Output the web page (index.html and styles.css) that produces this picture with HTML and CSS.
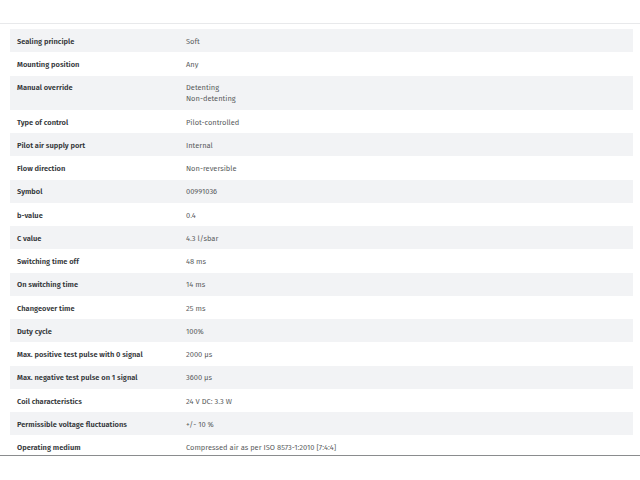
FILE: index.html
```html
<!DOCTYPE html>
<html>
<head>
<meta charset="utf-8">
<link rel="stylesheet" href="styles.css">
</head>
<body>
<div class="page">
  <div class="frame">
    <div class="specs">
      <div class="row"><div class="k">Sealing principle</div><div class="v">Soft</div></div>
      <div class="row"><div class="k">Mounting position</div><div class="v">Any</div></div>
      <div class="row"><div class="k">Manual override</div><div class="v">Detenting<br>Non-detenting</div></div>
      <div class="row"><div class="k">Type of control</div><div class="v">Pilot-controlled</div></div>
      <div class="row"><div class="k">Pilot air supply port</div><div class="v">Internal</div></div>
      <div class="row"><div class="k">Flow direction</div><div class="v">Non-reversible</div></div>
      <div class="row"><div class="k">Symbol</div><div class="v">00991036</div></div>
      <div class="row"><div class="k">b-value</div><div class="v">0.4</div></div>
      <div class="row"><div class="k">C value</div><div class="v">4.3 l/sbar</div></div>
      <div class="row"><div class="k">Switching time off</div><div class="v">48 ms</div></div>
      <div class="row"><div class="k">On switching time</div><div class="v">14 ms</div></div>
      <div class="row"><div class="k">Changeover time</div><div class="v">25 ms</div></div>
      <div class="row"><div class="k">Duty cycle</div><div class="v">100%</div></div>
      <div class="row"><div class="k">Max. positive test pulse with 0 signal</div><div class="v">2000 µs</div></div>
      <div class="row"><div class="k">Max. negative test pulse on 1 signal</div><div class="v">3600 µs</div></div>
      <div class="row"><div class="k">Coil characteristics</div><div class="v">24 V DC: 3.3 W</div></div>
      <div class="row"><div class="k">Permissible voltage fluctuations</div><div class="v">+/- 10 %</div></div>
      <div class="row"><div class="k">Operating medium</div><div class="v">Compressed air as per ISO 8573-1:2010 [7:4:4]</div></div>
    </div>
  </div>
</div>
</body>
</html>
```
FILE: styles.css
```css
html, body {
  margin: 0;
  padding: 0;
  background: #ffffff;
}
.page {
  width: 640px;
  height: 480px;
  padding-top: 23px;
  box-sizing: border-box;
}
.frame {
  border-top: 1px solid #e8e9eb;
  border-bottom: 1px solid #8a8c8e;
  height: 433px;
  overflow: hidden;
  padding: 5px 7px 0 10px;
  box-sizing: border-box;
}
.specs {
  font-family: "Fira Sans", "Noto Sans", sans-serif;
  font-size: 7.5px;
  line-height: 11px;
}
.row {
  display: grid;
  grid-template-columns: 176px 1fr;
  padding: 6.75px 0 5.5px;
}
.row:nth-child(odd) {
  background: #f2f3f5;
}
.k {
  padding-left: 7px;
  font-weight: 600;
  color: #333639;
}
.v {
  color: #5a5d60;
}
```
